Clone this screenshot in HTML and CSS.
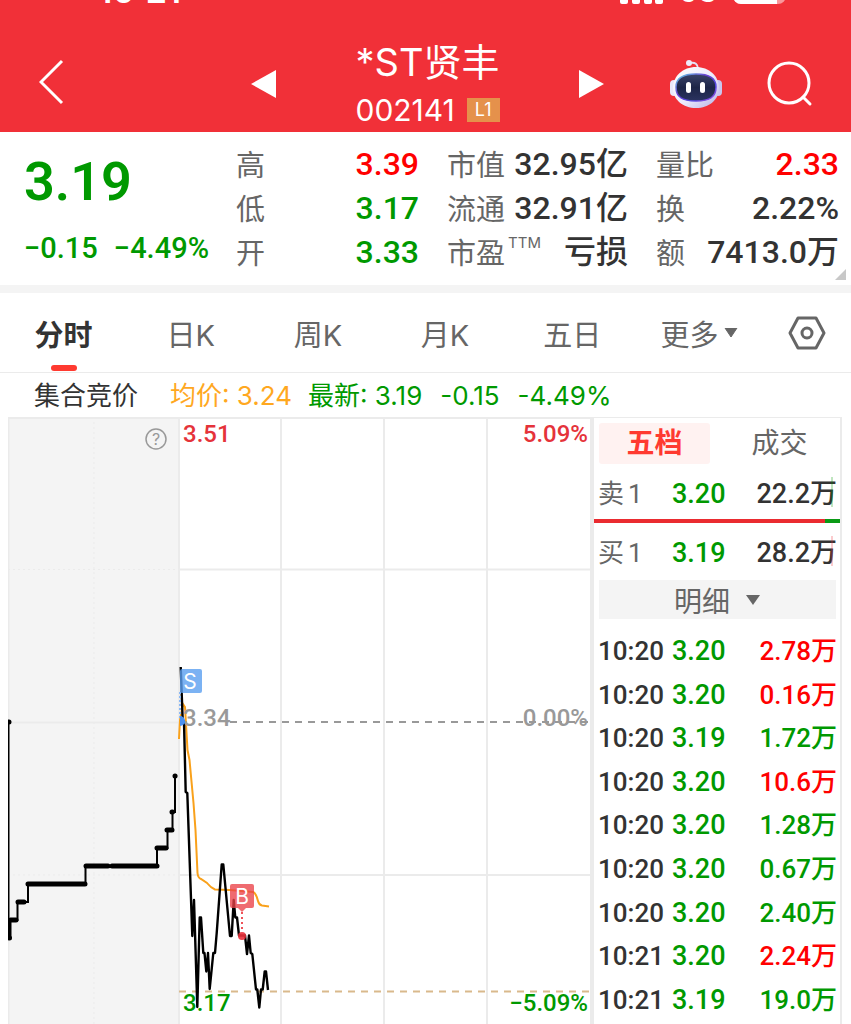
FILE: index.html
```html
<!DOCTYPE html>
<html lang="zh-CN">
<head>
<meta charset="utf-8">
<meta name="viewport" content="width=device-width, initial-scale=1">
<title>*ST贤丰 002141</title>
<link rel="stylesheet" href="styles.css">
</head>
<body>
<div class="page">
  <header class="topbar">
    <div class="status">
      <span class="status-time">10:21</span>
      <span class="status-right">
        <svg class="signal" width="44" height="34" viewBox="0 0 44 34" fill="#fff"><rect x="0" y="22" width="8" height="8" rx="2"/><rect x="12" y="17" width="8" height="13" rx="2"/><rect x="24" y="12" width="8" height="18" rx="2"/><rect x="35" y="6" width="8" height="24" rx="2"/></svg>
        <span class="status-net">5G</span>
        <svg class="battery" width="54" height="34" viewBox="0 0 54 34"><rect x="0" y="4" width="53" height="26" rx="8" fill="#f9979b"/><path d="M8 4H44V30H8a8 8 0 0 1-8-8V12a8 8 0 0 1 8-8Z" fill="#fff"/></svg>
      </span>
    </div>
    <nav class="titlebar">
      <div class="side-left">
        <button class="icon-btn" aria-label="返回"><svg width="26" height="46" viewBox="0 0 26 46"><path d="M23 2 2 23 23 44" fill="none" stroke="#fff" stroke-width="3"/></svg></button>
      </div>
      <div class="switcher">
        <button class="icon-btn" aria-label="上一只"><svg width="25" height="28" viewBox="0 0 25 28"><path d="M25 0V28L0 14Z" fill="#fff"/></svg></button>
        <div class="stock">
          <h1 class="stock-name">*ST贤丰</h1>
          <div class="stock-code"><span>002141</span><span class="level">L1</span></div>
        </div>
        <button class="icon-btn" aria-label="下一只"><svg width="25" height="28" viewBox="0 0 25 28"><path d="M0 0V28L25 14Z" fill="#fff"/></svg></button>
      </div>
      <div class="side-right">
        <button class="icon-btn" aria-label="智能助手">
          <svg width="54" height="50" viewBox="0 0 54 50">
            <defs>
              <linearGradient id="shell" x1="0" y1="0" x2="1" y2="1"><stop offset="0" stop-color="#fff"/><stop offset=".55" stop-color="#eceafb"/><stop offset="1" stop-color="#b4b0e6"/></linearGradient>
              <linearGradient id="rim" x1="0" y1="0" x2="1" y2="1"><stop offset="0" stop-color="#62d5e6"/><stop offset=".4" stop-color="#6a3fd0"/><stop offset=".7" stop-color="#5148e0"/><stop offset="1" stop-color="#a04be0"/></linearGradient>
              <linearGradient id="visor" x1="0" y1="0" x2="0" y2="1"><stop offset="0" stop-color="#3a4268"/><stop offset=".5" stop-color="#1d2547"/><stop offset="1" stop-color="#2b3360"/></linearGradient>
            </defs>
            <path d="M21 4c5-1 8 1 8 6" fill="none" stroke="#e4e0f5" stroke-width="2"/>
            <circle cx="20" cy="4" r="3" fill="#efeafa"/>
            <rect x="1" y="21" width="8" height="16" rx="4" fill="#e9e7fa"/>
            <rect x="45" y="21" width="8" height="16" rx="4" fill="#c9c5ee"/>
            <path d="M27 8C40 8 50 17 50 29S40 49 27 49 4 41 4 29 14 8 27 8Z" fill="url(#shell)"/>
            <path d="M27 15c13 0 20 4 20 13 0 10-6 14-20 14S7 38 7 28c0-9 7-13 20-13Z" fill="url(#visor)" stroke="url(#rim)" stroke-width="1.5"/>
            <rect x="17" y="23" width="5" height="11" rx="2.5" fill="#fff"/>
            <rect x="31" y="23" width="5" height="11" rx="2.5" fill="#fff"/>
          </svg>
        </button>
        <button class="icon-btn" aria-label="搜索"><svg width="46" height="46" viewBox="0 0 46 46" fill="none" stroke="#fff" stroke-width="3"><circle cx="22" cy="22" r="20"/><path d="M36 36 43 43" stroke-linecap="round"/></svg></button>
      </div>
    </nav>
  </header>

  <section class="quote">
    <div class="quote-price">
      <div class="last">3.19</div>
      <div class="change"><span>−0.15</span><span>−4.49%</span></div>
    </div>
    <dl class="stats">
      <div class="stat"><dt>高</dt><dd class="up">3.39</dd></div>
      <div class="stat"><dt>低</dt><dd class="down">3.17</dd></div>
      <div class="stat"><dt>开</dt><dd class="down">3.33</dd></div>
    </dl>
    <dl class="stats">
      <div class="stat"><dt>市值</dt><dd>32.95亿</dd></div>
      <div class="stat"><dt>流通</dt><dd>32.91亿</dd></div>
      <div class="stat"><dt>市盈<sup class="ttm">TTM</sup></dt><dd>亏损</dd></div>
    </dl>
    <dl class="stats">
      <div class="stat"><dt>量比</dt><dd class="up">2.33</dd></div>
      <div class="stat"><dt>换</dt><dd>2.22%</dd></div>
      <div class="stat"><dt>额</dt><dd>7413.0万</dd></div>
    </dl>
    <svg class="corner" width="11" height="11" viewBox="0 0 11 11"><path d="M11 0V11H0Z" fill="#c8c8c8"/></svg>
  </section>

  <nav class="tabs">
    <button class="tab tab-active">分时</button>
    <button class="tab">日K</button>
    <button class="tab">周K</button>
    <button class="tab">月K</button>
    <button class="tab">五日</button>
    <button class="tab">更多<svg width="14" height="10" viewBox="0 0 14 10"><path d="M1 0H13L7 9Z" fill="#666" stroke="#666" stroke-linejoin="round"/></svg></button>
    <button class="tab" aria-label="设置"><svg width="38" height="34" viewBox="0 0 38 34" fill="none" stroke="#666" stroke-width="3" stroke-linejoin="round"><path d="M10 2H28L36 17 28 32H10L2 17Z"/><circle cx="19" cy="17" r="5"/></svg></button>
  </nav>

  <div class="summary">
    <span class="summary-auction">集合竞价</span>
    <span class="summary-avg">均价: 3.24</span>
    <span class="summary-last"><span>最新: 3.19</span><span>-0.15</span><span>-4.49%</span></span>
  </div>

  <main class="market">
    <svg class="chart" viewBox="0 0 584 607" role="img" aria-label="分时走势">
      <rect width="171" height="607" fill="#f4f4f4"/>
      <g class="grid">
        <path d="M0 1H584M.5 0V607M171 0V607M273 0V607M376 0V607M479 0V607M583 0V607M171 152.500H584M171 458H584"/>
        <path d="M0 305.500H171"/>
        <path class="dotted" d="M86 0V607M0 152.500H171M0 458H171"/>
      </g>
      <path class="mid-line" d="M222 305H584"/>
      <path class="low-line" d="M171 574.500H584"/>

      <path class="auction" d="M.5 305V521M2.500 521V503H9.500V485H20V467H77.500V449H149V431H159.500V413H164.500V395H167V359"/>
      <path class="auction-dots" d="M.5 305h.5M1 521h.5M2.500 503H8M10 485H16M20 467H77M78 449H100M104 449H149M149 431H158M159 413H164M164 395h.5M167 359h.1"/>

      <path class="average" d="M171 322 172 303 175 287 177 290 179.500 333 181.500 343 185.500 386 187.500 413 189.500 456Q190 461 193 462L199 466Q203 471 207 472.500L222 473 245 475Q248 476 250 484 251 488 254 488.500L261 489.500"/>
      <path class="price" d="M172.700 250 174.700 303 176 305 177.700 375 179.300 376 184.300 519 186 483 189.300 590 191.700 500.500H193L195.300 536H196.500L198.300 554.500 200 536 201.700 572 205.300 536H207L208.700 516 213.700 447.500H215.300L222 519H223.700L225.700 483 227.300 500.500H229L231 518.500H237L239 537 241 518.500 242.700 536 244.300 537 248 572.500H249.300L251.300 590.500 253 572.500H254.700L256.700 554.500H258L260 573"/>

      <g class="axis">
        <text class="axis-up" x="175" y="25">3.51</text>
        <text class="axis-up axis-end" x="580" y="25">5.09%</text>
        <text class="axis-flat" x="175" y="309">3.34</text>
        <text class="axis-flat axis-end" x="580" y="309">0.00%</text>
        <text class="axis-down" x="175" y="594">3.17</text>
        <text class="axis-down axis-end" x="580" y="594">−5.09%</text>
      </g>

      <circle cx="148" cy="22" r="10" fill="none" stroke="#999" stroke-width="1.500"/>
      <text class="help" x="148" y="28">?</text>

      <path d="M172 275V302" stroke="#8ab8f5" stroke-width="2" stroke-dasharray="2 2"/>
      <path d="M172 299a5 5 0 0 1 0 10Z" fill="#4a90f0"/>
      <rect x="172" y="252" width="22" height="24" rx="2" fill="#5a9ff0" fill-opacity=".8"/>
      <text class="marker" x="182" y="272">S</text>
      <path d="M234 495V513" stroke="#ef5258" stroke-width="2" stroke-dasharray="2 3"/>
      <circle cx="234" cy="519" r="4" fill="#e8323c" fill-opacity=".9"/>
      <path d="M224 467H244a2 2 0 0 1 2 2V489a2 2 0 0 1-2 2H238L234 495 230 491H224a2 2 0 0 1-2-2V469a2 2 0 0 1 2-2Z" fill="#ea4148" fill-opacity=".78"/>
      <text class="marker" x="234" y="487">B</text>
    </svg>

    <aside class="book">
      <div class="book-tabs">
        <button class="book-tab book-tab-active">五档</button>
        <button class="book-tab">成交</button>
      </div>
      <table class="rows level-row level-sell">
        <tbody><tr><th scope="row">卖<span class="lv">1</span></th><td class="cell-price down">3.20</td><td>22.2万</td></tr></tbody>
      </table>
      <div class="ratio"><span class="ratio-buy" style="width:94%"></span></div>
      <table class="rows level-row level-buy">
        <tbody><tr><th scope="row">买<span class="lv">1</span></th><td class="cell-price down">3.19</td><td>28.2万</td></tr></tbody>
      </table>
      <button class="detail">明细<svg width="16" height="12" viewBox="0 0 16 12"><path d="M1 1H15L8 11Z" fill="#666"/></svg></button>
      <table class="rows trades">
        <tbody>
          <tr><td>10:20</td><td class="cell-price down">3.20</td><td class="up">2.78万</td></tr>
          <tr><td>10:20</td><td class="cell-price down">3.20</td><td class="up">0.16万</td></tr>
          <tr><td>10:20</td><td class="cell-price down">3.19</td><td class="down">1.72万</td></tr>
          <tr><td>10:20</td><td class="cell-price down">3.20</td><td class="up">10.6万</td></tr>
          <tr><td>10:20</td><td class="cell-price down">3.20</td><td class="down">1.28万</td></tr>
          <tr><td>10:20</td><td class="cell-price down">3.20</td><td class="down">0.67万</td></tr>
          <tr><td>10:20</td><td class="cell-price down">3.20</td><td class="down">2.40万</td></tr>
          <tr><td>10:21</td><td class="cell-price down">3.20</td><td class="up">2.24万</td></tr>
          <tr><td>10:21</td><td class="cell-price down">3.19</td><td class="down">19.0万</td></tr>
        </tbody>
      </table>
    </aside>
  </main>
</div>
</body>
</html>
```
FILE: styles.css
```css
:root {
  --red: #f13038;
  --up: #f00;
  --down: #009900;
  --ink: #333;
  --muted: #666;
  --line: #ebebeb;
  --soft: #f4f4f4;
  --text: Inter, "Noto Sans CJK SC", sans-serif;
  --digits: Roboto, "Noto Sans CJK SC", sans-serif;
}

* { box-sizing: border-box; }

body {
  margin: 0;
  background: #fff;
  color: var(--ink);
  font-family: var(--text);
}

button {
  margin: 0;
  padding: 0;
  border: 0;
  background: none;
  color: inherit;
  font: inherit;
}

svg { display: block; flex: none; }
dl, dd, dt, h1 { margin: 0; }

.page { overflow: hidden; }
.up { color: var(--up); }
.down { color: var(--down); }

/* Header */
.topbar {
  display: flex;
  flex-direction: column;
  background: var(--red);
  color: #fff;
}

.status {
  display: flex;
  justify-content: space-between;
  height: 34px;
  margin-top: -26px;
  padding: 0 64px 0 98px;
  line-height: 34px;
}

.status-time { font-size: 34px; font-weight: 600; }
.status-right { display: flex; gap: 15px; }
.status-net { font-size: 28px; font-weight: 600; line-height: 36px; }

.titlebar {
  display: grid;
  grid-template-columns: 1fr 354px 1fr;
  align-items: center;
  height: 124px;
  padding: 26px 0 22px 4px;
}

.side-left { padding-left: 35px; }

.side-right {
  display: flex;
  align-items: center;
  justify-content: flex-end;
  gap: 44px;
  padding-right: 38px;
}

.switcher {
  display: flex;
  align-items: center;
  justify-content: space-between;
}

.stock {
  display: flex;
  flex-direction: column;
  align-items: center;
  padding-top: 4px;
}

.stock-name {
  font-size: 38px;
  font-weight: 400;
  line-height: 48px;
}

.stock-code {
  display: flex;
  align-items: center;
  gap: 12px;
  font-size: 30px;
  line-height: 48px;
}

.level {
  padding: 0 8px;
  background: #e5914b;
  font-size: 18px;
  line-height: 24px;
}

/* Quote */
.quote {
  position: relative;
  display: grid;
  grid-template-columns:
    minmax(0, 184fr) minmax(0, 183fr) minmax(0, 181fr) minmax(0, 183fr);
  gap: 28px;
  padding: 10px 12px 11px 24px;
  border-bottom: 8px solid var(--soft);
}

.quote-price {
  color: var(--down);
  font-family: var(--digits);
  font-weight: 600;
  white-space: nowrap;
}

.last { font-size: 54px; line-height: 80px; }

.change {
  display: flex;
  gap: 16px;
  font-size: 29px;
  font-weight: 500;
  line-height: 52px;
}

.stat {
  display: flex;
  justify-content: space-between;
  align-items: center;
  height: 44px;
  white-space: nowrap;
}

.stat dt {
  padding-top: 3px;
  color: var(--muted);
  font-size: 29px;
  line-height: 44px;
}

.stat dd {
  font-family: var(--digits);
  font-size: 32px;
  font-weight: 500;
  line-height: 44px;
}

.ttm {
  margin-left: 3px;
  font-size: 15px;
  line-height: 0;
  vertical-align: 16px;
}

.corner {
  position: absolute;
  right: 5px;
  bottom: 5px;
}

/* Tabs */
.tabs {
  display: grid;
  grid-template-columns: repeat(6, 1fr) 88px;
  height: 80px;
  border-bottom: 1px solid var(--line);
}

.tab {
  position: relative;
  display: flex;
  align-items: center;
  justify-content: center;
  gap: 6px;
  color: var(--muted);
  font-size: 29px;
}

.tab-active { color: var(--ink); font-weight: 700; }

.tab-active::after {
  content: "";
  position: absolute;
  bottom: 1px;
  width: 26px;
  height: 6px;
  border-radius: 3px;
  background: #ff3a30;
}

.summary {
  display: flex;
  gap: 16px;
  height: 44px;
  padding-left: 34px;
  font-size: 26px;
  line-height: 46px;
  white-space: nowrap;
}

.summary-auction { padding-right: 16px; }
.summary-avg { color: #ffa81f; }
.summary-last { display: flex; gap: 18px; color: var(--down); }

/* Chart */
.market {
  display: grid;
  grid-template-columns: 584fr 250fr;
  padding: 0 9px 0 8px;
}

.chart { width: 100%; height: auto; }
.grid path { fill: none; stroke: var(--line); stroke-width: 2; }
.grid .dotted { stroke-width: 1; stroke-dasharray: 2 3; }
.mid-line { stroke: #999; stroke-width: 2; stroke-dasharray: 7 6; }
.low-line { stroke: #d9b98c; stroke-width: 2; stroke-dasharray: 7 6; }
.auction { fill: none; stroke: #000; stroke-width: 2; }
.auction-dots { fill: none; stroke: #000; stroke-width: 5; stroke-linecap: round; }
.price { fill: none; stroke: #000; stroke-width: 2.4; stroke-linejoin: round; }
.average { fill: none; stroke: #f9a11b; stroke-width: 2; }

.axis {
  font-family: var(--digits);
  font-size: 24px;
  font-weight: 500;
}

.axis-end { text-anchor: end; }
.axis-up { fill: #e5333a; }
.axis-flat { fill: #999; }
.axis-down { fill: var(--down); }
.help { fill: #999; font-size: 16px; text-anchor: middle; }
.marker { fill: #fff; font-size: 21px; text-anchor: middle; }

/* Order book */
.book {
  display: flex;
  flex-direction: column;
  padding-bottom: 5px;
  border: solid var(--line);
  border-width: 1px 2px 0;
}

.book-tabs {
  display: grid;
  grid-template-columns: 1fr 1fr;
  gap: 14px;
  padding: 5px 5px 0;
}

.book-tab {
  height: 41px;
  border-radius: 3px;
  color: var(--muted);
  font-size: 28px;
  line-height: 41px;
}

.book-tab-active {
  background: #fff2f1;
  color: #ff3a30;
  font-weight: 700;
}

.rows {
  display: grid;
  padding: 0 3px 0 4px;
  font-family: var(--digits);
  font-size: 26px;
  font-weight: 500;
  white-space: nowrap;
}

.rows tbody { display: grid; grid-auto-rows: 1fr; }

.rows tr {
  display: grid;
  grid-template-columns: 74px 1fr auto;
  align-items: baseline;
  align-content: center;
}

.rows th,
.rows td { padding: 0; text-align: left; }

.rows th {
  color: var(--muted);
  font-weight: 400;
}

.rows .cell-price { font-size: 27px; }

.lv { margin-left: 4px; }
.level-row { position: relative; height: 55px; font-size: 27px; }
.level-row th { font-size: 26px; }

.level-row::after {
  content: "";
  position: absolute;
  top: 13px;
  right: 7px;
  width: 2px;
  height: 30px;
}

.level-sell::after { background: rgba(0, 153, 0, 0.25); }
.level-buy::after { background: rgba(241, 48, 56, 0.25); }

.ratio { height: 4px; background: #0a9a16; }
.ratio-buy { display: block; height: 4px; background: #ea2b30; }

.detail {
  display: flex;
  align-items: center;
  justify-content: center;
  gap: 15px;
  height: 39px;
  margin: 2px 4px 8px 5px;
  background: var(--soft);
  color: var(--muted);
  font-size: 28px;
}

.trades { flex: 1; }
```
